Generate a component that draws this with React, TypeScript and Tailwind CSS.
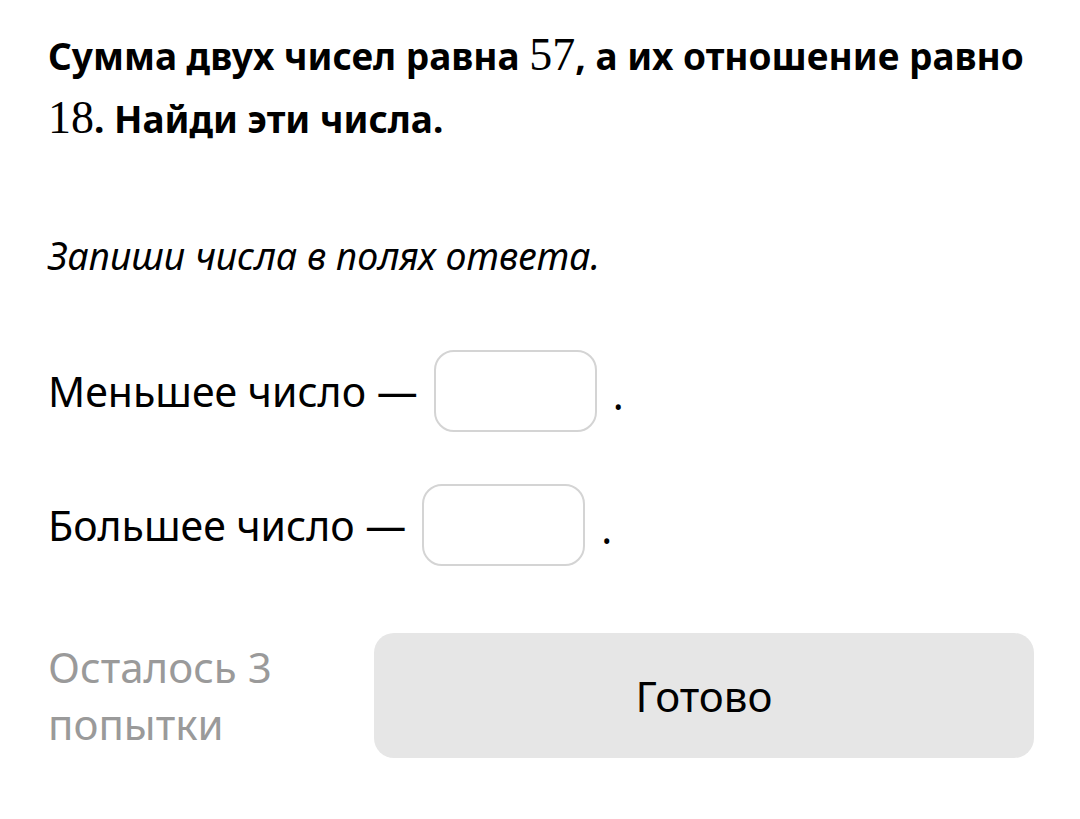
import React from 'react';

const sans = { fontFamily: '"Noto Sans", "Open Sans", sans-serif' };

const MathNum: React.FC<{ children: React.ReactNode }> = ({ children }) => (
  <span className="font-normal text-[46px] [font-family:'Liberation_Serif',serif]">{children}</span>
);

const AnswerRow: React.FC<{ label: string }> = ({ label }) => (
  <div className="flex items-center h-[82px]">
    <span className="text-[41px] leading-none text-black">{label}</span>
    <input
      type="text"
      className="ml-[16px] w-[163px] h-[82px] rounded-[20px] border-2 border-[#d4d4d4] bg-white outline-none"
    />
    <span className="ml-[16px] text-[41px] leading-none text-black mt-[6px]">.</span>
  </div>
);

export default function App() {
  return (
    <div className="min-h-[819px] bg-white pl-[48px] pr-[46px] pt-[24px] text-black" style={sans}>
      <h1 className="text-[37px] font-bold leading-[62px]">
        Сумма двух чисел равна <MathNum>57</MathNum>, а их отношение равно <MathNum>18</MathNum>. Найди эти числа.
      </h1>

      <p className="mt-[82px] text-[37.5px] italic leading-[48px]">Запиши числа в полях ответа.</p>

      <div className="mt-[70px] flex flex-col gap-[52px]">
        <AnswerRow label="Меньшее число —" />
        <AnswerRow label="Большее число —" />
      </div>

      <div className="mt-[67px] flex items-start">
        <div className="w-[300px] shrink-0 mt-[5px] text-[42px] leading-[57px] text-[#9a9a9a]">
          Осталось 3 попытки
        </div>
        <button className="ml-[26px] flex-1 h-[125px] rounded-[20px] bg-[#e6e6e6] text-[42px] text-black">
          Готово
        </button>
      </div>
    </div>
  );
}
